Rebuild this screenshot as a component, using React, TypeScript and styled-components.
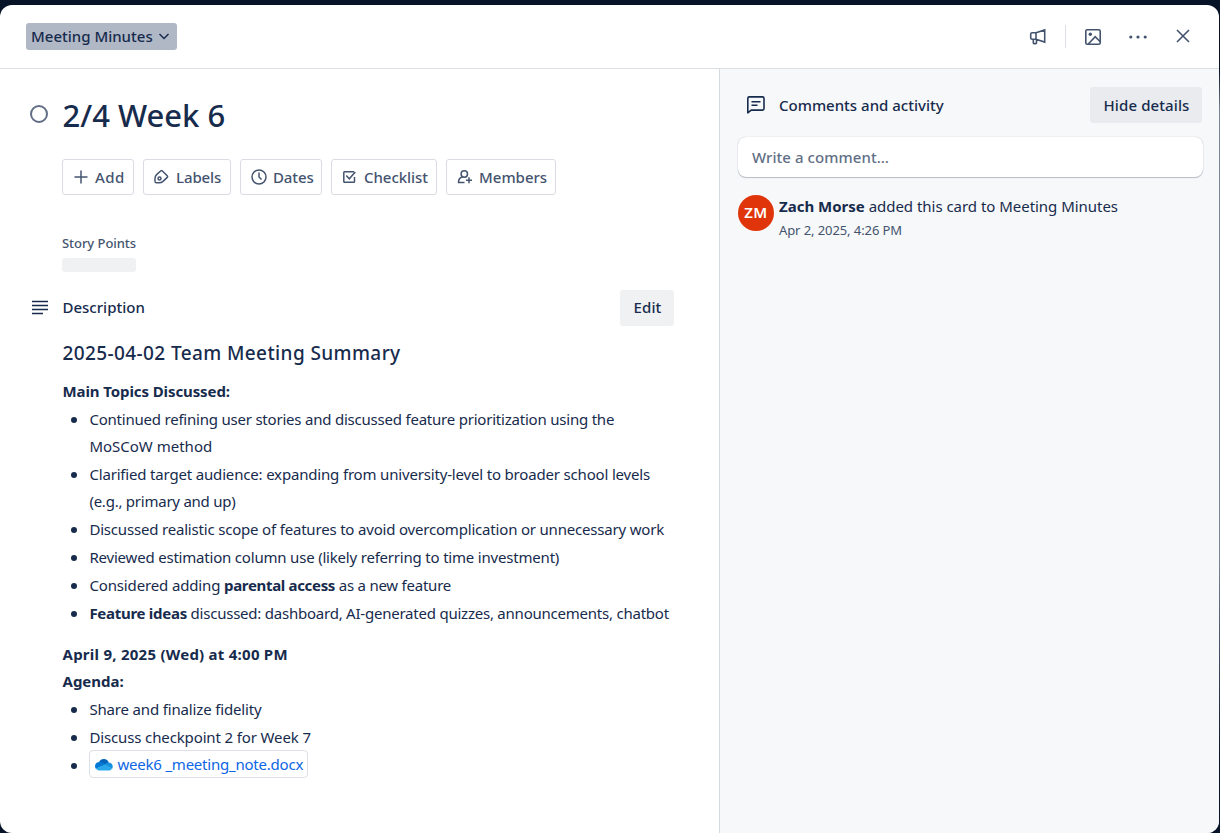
import React from "react";
import styled, { createGlobalStyle } from "styled-components";

const ink = "#172b4d";
const subtle = "#44546f";

const GlobalStyle = createGlobalStyle`
  * { box-sizing: border-box; }
  body {
    margin: 0;
    overflow: hidden;
    background: #071327;
    color: ${ink};
    font-family: "Noto Sans", "Open Sans", sans-serif;
    font-size: 15px;
  }
`;

const Backdrop = styled.div`
  height: 833px;
  padding: 5px 1px 0 0;
  background: linear-gradient(#071327 0, #071327 70px, #7a8497 110px, #7a8497 560px, #4a556b 640px, #071327 760px);
`;

const Dialog = styled.div`
  height: 828px;
  display: flex;
  flex-direction: column;
  overflow: hidden;
  border-radius: 12px;
  background: #fff;
`;

const Frame = styled.div`
  height: 828px;
  background: linear-gradient(#071327, #071327) top / 100% 20px no-repeat,
    linear-gradient(#071327, #071327) bottom / 100% 20px no-repeat;
`;

const Text = styled.span<{ $ls?: number }>`
  letter-spacing: ${(p) => p.$ls ?? 0}px;
  white-space: pre;
`;

const Header = styled.header`
  flex: none;
  height: 64px;
  display: flex;
  align-items: center;
  justify-content: space-between;
  padding: 0 9px 1px 26px;
  border-bottom: 1px solid #dcdfe4;
`;

const ListPicker = styled.button`
  display: flex;
  align-items: center;
  gap: 4px;
  height: 27px;
  width: 151px;
  padding: 0 0 0 5px;
  border: 0;
  border-radius: 3px;
  background: #b1b8c5;
  color: ${ink};
  font: 500 15px/27px "Noto Sans", sans-serif;
`;

const HeaderActions = styled.div`
  display: flex;
  align-items: center;
  color: ${subtle};
`;

const IconSlot = styled.div<{ $w: number }>`
  width: ${(p) => p.$w}px;
  height: 24px;
  display: flex;
  align-items: center;
  justify-content: center;
`;

const Separator = styled.div`
  width: 1px;
  height: 23px;
  background: #dcdfe4;
`;

const Body = styled.div`
  flex: 1;
  display: flex;
`;

const Main = styled.main`
  width: 720px;
  padding: 22px 45px 0 62px;
  border-right: 1px solid #d5d9e0;
`;

const TitleRow = styled.div`
  display: flex;
  align-items: center;
  gap: 14.5px;
  height: 48px;
  margin-left: -32px;
`;

const CompleteToggle = styled.div`
  width: 18px;
  height: 18px;
  margin-top: -3px;
  border: 2px solid #626f86;
  border-radius: 50%;
`;

const Title = styled.h1`
  margin: 0;
  font-size: 31px;
  font-weight: 500;
  line-height: 48px;
`;

const Toolbar = styled.div`
  display: flex;
  gap: 9px;
  margin-top: 20px;
`;

const ToolButton = styled.button<{ $w: number }>`
  display: flex;
  align-items: center;
  gap: 6px;
  width: ${(p) => p.$w}px;
  height: 36px;
  padding: 0 0 0 9px;
  border: 1px solid #d9dce2;
  border-radius: 3px;
  background: #fff;
  color: ${subtle};
  font: 500 15px/34px "Noto Sans", sans-serif;
`;

const FieldLabel = styled.div`
  margin-top: 38px;
  color: ${subtle};
  font-size: 13px;
  font-weight: 500;
  line-height: 20px;
`;

const FieldValue = styled.div`
  width: 74px;
  height: 14px;
  margin-top: 5px;
  border-radius: 3px;
  background: #f0f1f3;
`;

const SectionRow = styled.div`
  display: flex;
  align-items: center;
  height: 36px;
  margin: 18px 0 0 -31px;
  font-weight: 500;
`;

const SectionName = styled.div`
  flex: 1;
  margin-left: 13.5px;
  padding-bottom: 3px;
`;

const GreyButton = styled.button<{ $w: number; $bg: string; $lh: number }>`
  width: ${(p) => p.$w}px;
  height: 36px;
  padding: 0 0 0 1px;
  border: 0;
  border-radius: 3px;
  background: ${(p) => p.$bg};
  color: ${ink};
  font: 500 15px/${(p) => p.$lh}px "Noto Sans", sans-serif;
`;

const EditButton = styled(GreyButton)`
  padding-bottom: 1px;
`;

const Summary = styled.h2`
  margin: 13px 0 11px;
  padding-left: 0.5px;
  font-size: 19px;
  font-weight: 500;
  line-height: 28px;
`;

const Strong = styled.div`
  padding-left: 0.5px;
  font-weight: 700;
  line-height: 27px;
`;

const List = styled.ul`
  margin: 1px 0 0;
  padding: 0;
  list-style: none;
`;

const Item = styled.li`
  display: flex;
  line-height: 27px;
  margin-bottom: 1px;

  &::before {
    content: "";
    flex: none;
    width: 6px;
    height: 6px;
    margin: 11px 12.4px 0 9px;
    border-radius: 50%;
    background: ${ink};
  }
`;

const Agenda = styled.div`
  margin-top: 14px;
`;

const FileLink = styled.a`
  display: flex;
  align-items: center;
  gap: 4.5px;
  width: 219px;
  height: 28px;
  margin: -2px 0 0 -0.4px;
  padding-left: 5px;
  border: 1px solid #dcdfe4;
  border-radius: 4px;
  color: #0c66e4;
  line-height: 26px;
`;

const Side = styled.aside`
  flex: 1;
  padding: 18px 16px 0 18px;
  background: #f7f8f9;
`;

const SideHeader = styled.div`
  display: flex;
  align-items: center;
  height: 36px;
  padding: 0 1px 0 8px;
  font-weight: 500;
`;

const SideTitle = styled.div`
  flex: 1;
  margin-left: 13px;
`;

const CommentBox = styled.div`
  height: 40px;
  margin-top: 14px;
  padding-left: 14px;
  border-radius: 8px;
  background: #fff;
  box-shadow: 0 1px 1px rgba(9, 30, 66, 0.25), 0 0 1px rgba(9, 30, 66, 0.31);
  color: #626f86;
  font-weight: 500;
  line-height: 41px;
`;

const Activity = styled.div`
  display: flex;
  gap: 5px;
  margin-top: 18px;
`;

const Avatar = styled.div`
  width: 36px;
  height: 36px;
  border-radius: 50%;
  background: #e0350b;
  color: #fff;
  font-weight: 600;
  line-height: 35px;
  text-align: center;
`;

const ActivityLine = styled.div`
  margin-top: -1px;
  line-height: 24px;
`;

const Stamp = styled.div`
  color: ${subtle};
  font-size: 13px;
  line-height: 24px;
`;

const Svg = ({ w, h = w, sw = 1.6, children }: { w: number; h?: number; sw?: number; children: React.ReactNode }) => (
  <svg width={w} height={h} viewBox={`0 0 ${w} ${h}`} fill="none" stroke="currentColor" strokeWidth={sw}>
    {children}
  </svg>
);

const tools = [
  { name: "Add", w: 72, ls: 0.4, icon: <path d="M9 2.5v13M2.5 9h13" /> },
  {
    name: "Labels", w: 88, ls: -0.1,
    icon: (
      <>
        <path d="M7.600 3 3.600 6.600C2.400 7.800 2 9.200 2 10.600v2.600c0 1 .6 1.600 1.600 1.600h2.600c1.500 0 2.700-.4 3.800-1.400l4.200-4c.6-.6.6-1.100 0-1.700L9.400 3c-.6-.6-1.200-.6-1.800 0Z" />
        <circle cx="6.500" cy="10.500" r="1.500" />
      </>
    ),
  },
  {
    name: "Dates", w: 82, ls: -0.1,
    icon: <><circle cx="9" cy="9" r="7" /><path d="M9 4.500V9l2.500 2.500" /></>,
  },
  {
    name: "Checklist", w: 106, ls: -0.05,
    icon: <><path d="M13 3.700H3.600c-.5 0-.8.3-.8.8v9c0 .5.3.8.8.8h9.100c.5 0 .8-.3.8-.8V9" /><path d="m5.300 7.600 3 3.200 6-6.800" /></>,
  },
  {
    name: "Members", w: 110, ls: 0,
    icon: <><circle cx="8.300" cy="6" r="3.200" /><path d="M6.500 9c-2.600.6-4 2.500-4 5.400h6M13 9.200v6M10 12.200h6" /></>,
  },
];

const topics: React.ReactNode[] = [
  <div>
    <Text $ls={-0.215}>Continued refining user stories and discussed feature prioritization using the</Text>
    <br />
    <Text>MoSCoW method</Text>
  </div>,
  <div>
    <Text $ls={-0.173}>Clarified target audience: expanding from university-level to broader school levels</Text>
    <br />
    <Text $ls={-0.24}>(e.g., primary and up)</Text>
  </div>,
  <Text $ls={-0.187}>Discussed realistic scope of features to avoid overcomplication or unnecessary work</Text>,
  <Text $ls={-0.197}>Reviewed estimation column use (likely referring to time investment)</Text>,
  <div>
    <Text $ls={-0.14}>Considered adding </Text>
    <Text as="b" $ls={-0.328}>parental access</Text>
    <Text $ls={-0.231}> as a new feature</Text>
  </div>,
  <div>
    <Text as="b" $ls={-0.28}>Feature ideas</Text>
    <Text $ls={-0.228}> discussed: dashboard, AI-generated quizzes, announcements, chatbot</Text>
  </div>,
];

export default function App() {
  return (
    <Backdrop>
      <GlobalStyle />
      <Frame>
        <Dialog>
          <Header>
            <ListPicker>
              <Text>Meeting Minutes</Text>
              <Svg w={14} sw={1.5}><path d="m2.500 5 4.500 4.500L11.500 5" /></Svg>
            </ListPicker>
            <HeaderActions>
              <IconSlot $w={54}>
                <Svg w={18} h={20}>
                  <path d="M7 6.700H3.200c-.9 0-1.500.6-1.500 1.500v3.600c0 .9.6 1.500 1.500 1.500H7M7 6.700v6.600M7 6.700 15.700 3.900v12.200L7 13.300M4.300 13.500v3.300c0 .5.3.8.8.8h1.600c.5 0 .8-.3.8-.8v-3.300" />
                </Svg>
              </IconSlot>
              <Separator />
              <IconSlot $w={54}>
                <Svg w={18} h={20}>
                  <rect x="1.800" y="3.800" width="14.400" height="14.400" rx="1.500" />
                  <circle cx="6.300" cy="8.200" r="1.700" fill="currentColor" stroke="none" />
                  <path d="m4.300 18 6.900-7.400 5 5.200" />
                </Svg>
              </IconSlot>
              <IconSlot $w={36}>
                <Svg w={20}>
                  <g fill="currentColor" stroke="none">
                    <circle cx="2.800" cy="11" r="1.600" />
                    <circle cx="10" cy="11" r="1.600" />
                    <circle cx="17.200" cy="11" r="1.600" />
                  </g>
                </Svg>
              </IconSlot>
              <IconSlot $w={54}>
                <Svg w={16}><path d="m2 2 12 12M14 2 2 14" /></Svg>
              </IconSlot>
            </HeaderActions>
          </Header>
          <Body>
            <Main>
              <TitleRow>
                <CompleteToggle />
                <Title><Text>2/4 Week 6</Text></Title>
              </TitleRow>
              <Toolbar>
                {tools.map((t) => (
                  <ToolButton key={t.name} $w={t.w}>
                    <Svg w={17} h={18} sw={1.5}>{t.icon}</Svg>
                    <Text $ls={t.ls}>{t.name}</Text>
                  </ToolButton>
                ))}
              </Toolbar>
              <FieldLabel><Text $ls={-0.05}>Story Points</Text></FieldLabel>
              <FieldValue />
              <SectionRow>
                <Svg w={18}><path d="M1 2.500h16M1 6.500h16M1 10.500h16M1 14.500h11" /></Svg>
                <SectionName><Text>Description</Text></SectionName>
                <EditButton $w={54} $bg="#f0f1f3" $lh={35}><Text $ls={0.1}>Edit</Text></EditButton>
              </SectionRow>
              <Summary><Text $ls={0.396}>2025-04-02 Team Meeting Summary</Text></Summary>
              <Strong><Text $ls={-0.1}>Main Topics Discussed:</Text></Strong>
              <List>
                {topics.map((topic, i) => <Item key={i}>{topic}</Item>)}
              </List>
              <Agenda>
                <Strong><Text $ls={0.25}>April 9, 2025 (Wed) at 4:00 PM</Text></Strong>
                <Strong><Text>Agenda:</Text></Strong>
              </Agenda>
              <List>
                <Item><Text $ls={-0.16}>Share and finalize fidelity</Text></Item>
                <Item><Text $ls={-0.13}>Discuss checkpoint 2 for Week 7</Text></Item>
                <Item>
                  <FileLink>
                    <svg width="18" height="13" viewBox="0 0 18 13">
                      <path d="M4 4.200A5.300 5.300 0 0 1 13.800 4.500L9 8 3 6Z" fill="#0364b8" />
                      <path d="M4.300 3.900C2 3.900 0 5.800 0 8.200c0 1 .3 1.800.8 2.500L11 6.500 8 4.800a7 7 0 0 0-3.700-.9Z" fill="#0078d4" />
                      <path d="M13.800 4.500c-1.200-.1-2.200.3-3 .9L9.500 7l7.700 3.800c1.400-2.700 0-6.100-3.400-6.300Z" fill="#1490df" />
                      <path d="M.8 10.600 10 6.600l7.200 4.200A4 4 0 0 1 14 12.500H4.300C2.800 12.500 1.600 11.800.8 10.600Z" fill="#28a8ea" />
                    </svg>
                    <Text $ls={-0.22}>week6 _meeting_note.docx</Text>
                  </FileLink>
                </Item>
              </List>
            </Main>
            <Side>
              <SideHeader>
                <Svg w={20}>
                  <path d="M1.800 17.800V3.400c0-.9.6-1.500 1.500-1.500h13.200c.9 0 1.500.6 1.500 1.500v10.200c0 .9-.6 1.500-1.500 1.500H5.200Z" strokeLinejoin="round" />
                  <path d="M5.500 6.800h9M5.500 10.300h6" />
                </Svg>
                <SideTitle><Text>Comments and activity</Text></SideTitle>
                <GreyButton $w={112} $bg="#e9ebee" $lh={36}><Text $ls={0.1}>Hide details</Text></GreyButton>
              </SideHeader>
              <CommentBox><Text $ls={0.06}>Write a comment…</Text></CommentBox>
              <Activity>
                <Avatar><Text $ls={0.4}>ZM</Text></Avatar>
                <div>
                  <ActivityLine>
                    <Text as="b">Zach Morse</Text>
                    <Text $ls={-0.03}> added this card to Meeting Minutes</Text>
                  </ActivityLine>
                  <Stamp><Text $ls={-0.09}>Apr 2, 2025, 4:26 PM</Text></Stamp>
                </div>
              </Activity>
            </Side>
          </Body>
        </Dialog>
      </Frame>
    </Backdrop>
  );
}
